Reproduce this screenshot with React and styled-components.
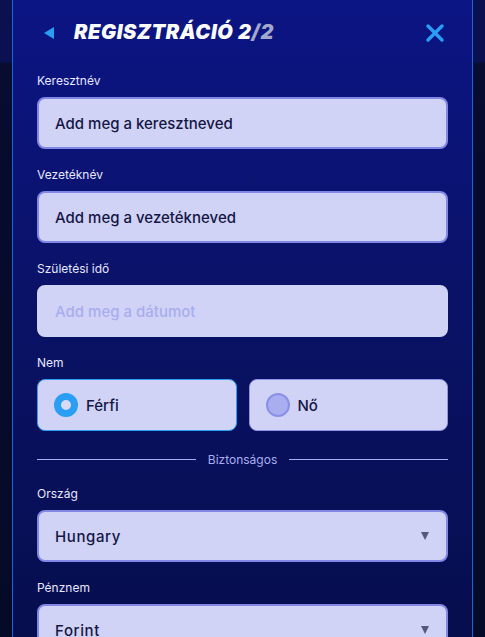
import React, { useState } from "react";
import styled, { createGlobalStyle } from "styled-components";

const GlobalStyle = createGlobalStyle`
  html, body {
    margin: 0;
    padding: 0;
    height: 100%;
    overflow: hidden;
  }
  body {
    background: linear-gradient(180deg, #0b1150 0px, #0b1150 62px, #070c30 63px, #050a28 100%);
    font-family: Inter, "Noto Sans", sans-serif;
  }
`;

const Page = () => {
  const [gender, setGender] = useState("male");

  return (
    <>
      <GlobalStyle />
      <Backdrop>
        <Panel>
          <Header>
            <BackBtn aria-label="back" />
            <Title>
              REGISZTRÁCIÓ 2<Muted>/2</Muted>
            </Title>
            <CloseBtn aria-label="close">
              <svg width="20" height="20" viewBox="0 0 20 20">
                <path
                  d="M3 3 L17 17 M17 3 L3 17"
                  stroke="#2a9df4"
                  strokeWidth="3.4"
                  strokeLinecap="round"
                />
              </svg>
            </CloseBtn>
          </Header>

          <Form>
            <Field>
              <Label>Keresztnév</Label>
              <Input>Add meg a keresztneved</Input>
            </Field>
            <Field>
              <Label>Vezetéknév</Label>
              <Input>Add meg a vezetékneved</Input>
            </Field>
            <Field>
              <Label>Születési idő</Label>
              <Input placeholder>Add meg a dátumot</Input>
            </Field>
            <Field>
              <Label>Nem</Label>
              <RadioRow>
                <RadioBox active={gender === "male"} onClick={() => setGender("male")}>
                  <Dot active={gender === "male"} />
                  Férfi
                </RadioBox>
                <RadioBox active={gender === "female"} onClick={() => setGender("female")}>
                  <Dot active={gender === "female"} />
                  Nő
                </RadioBox>
              </RadioRow>
            </Field>

            <Divider>
              <Line />
              <span>Biztonságos</span>
              <Line />
            </Divider>

            <Field>
              <Label>Ország</Label>
              <Select>
                Hungary
                <Caret />
              </Select>
            </Field>
            <Field>
              <Label>Pénznem</Label>
              <Select>
                Forint
                <Caret />
              </Select>
            </Field>
          </Form>
        </Panel>
      </Backdrop>
    </>
  );
};

export default Page;

const Backdrop = styled.div`
  height: 637px;
  padding: 0 12px;
  box-sizing: border-box;
`;

const Panel = styled.div`
  height: 100%;
  box-sizing: border-box;
  border-left: 1px solid #1d63d6;
  border-right: 1px solid #1d63d6;
  background: linear-gradient(180deg, #0b1584 0%, #0a1268 45%, #060e4e 100%);
  padding: 0 24px;
  overflow: hidden;
`;

const Header = styled.div`
  height: 64px;
  display: flex;
  align-items: center;
  padding-left: 7px;
`;

const BackBtn = styled.div`
  width: 0;
  height: 0;
  border-top: 6px solid transparent;
  border-bottom: 6px solid transparent;
  border-right: 10px solid #2a9df4;
  margin-right: 20px;
  margin-top: 1px;
`;

const Title = styled.h1`
  margin: 0;
  flex: 1;
  color: #ffffff;
  font-size: 20px;
  font-weight: 900;
  font-style: italic;
  letter-spacing: 0.6px;
`;

const Muted = styled.span`
  color: #a3a7cc;
`;

const CloseBtn = styled.div`
  display: flex;
  margin-right: 3px;
  margin-top: 2px;
`;

const Form = styled.div`
  padding-top: 9px;
`;

const Field = styled.div`
  margin-bottom: 18px;
`;

const Label = styled.div`
  color: #e6e8ff;
  font-size: 12px;
  line-height: 16px;
  margin-bottom: 8px;
`;

const Input = styled.div`
  height: 52px;
  box-sizing: border-box;
  border-radius: 8px;
  border: 2px solid ${(p) => (p.placeholder ? "#d0d3f5" : "#8087e4")};
  background: #d0d3f5;
  padding: 0 16px;
  display: flex;
  align-items: center;
  font-size: 15px;
  font-weight: 500;
  color: ${(p) => (p.placeholder ? "#a8adf0" : "#141646")};
`;

const Select = styled(Input)`
  justify-content: space-between;
  letter-spacing: 0.6px;
`;

const Caret = styled.div`
  width: 0;
  height: 0;
  border-left: 4.5px solid transparent;
  border-right: 4.5px solid transparent;
  border-top: 8px solid #55577e;
  margin-right: 1px;
`;

const RadioRow = styled.div`
  display: grid;
  grid-template-columns: 1fr 1fr;
  gap: 12px;
`;

const RadioBox = styled.div`
  height: 52px;
  box-sizing: border-box;
  border-radius: 8px;
  border: 1px solid ${(p) => (p.active ? "#2a9df4" : "#8f95e6")};
  background: #d0d3f5;
  display: flex;
  align-items: center;
  padding-left: 16px;
  gap: 8px;
  font-size: 15px;
  font-weight: 500;
  color: #141646;
  cursor: pointer;
`;

const Dot = styled.div`
  width: 24px;
  height: 24px;
  box-sizing: border-box;
  border-radius: 50%;
  border: ${(p) => (p.active ? "7px solid #2a9df4" : "2px solid #8a90e6")};
  background: ${(p) => (p.active ? "#d8dbf7" : "#a9aef0")};
`;

const Divider = styled.div`
  height: 20px;
  display: flex;
  align-items: center;
  gap: 12px;
  margin-top: 10px;
  margin-bottom: 17px;
  color: #a9aef0;
  font-size: 12px;
`;

const Line = styled.div`
  flex: 1;
  height: 1px;
  background: #a9aef0;
`;
